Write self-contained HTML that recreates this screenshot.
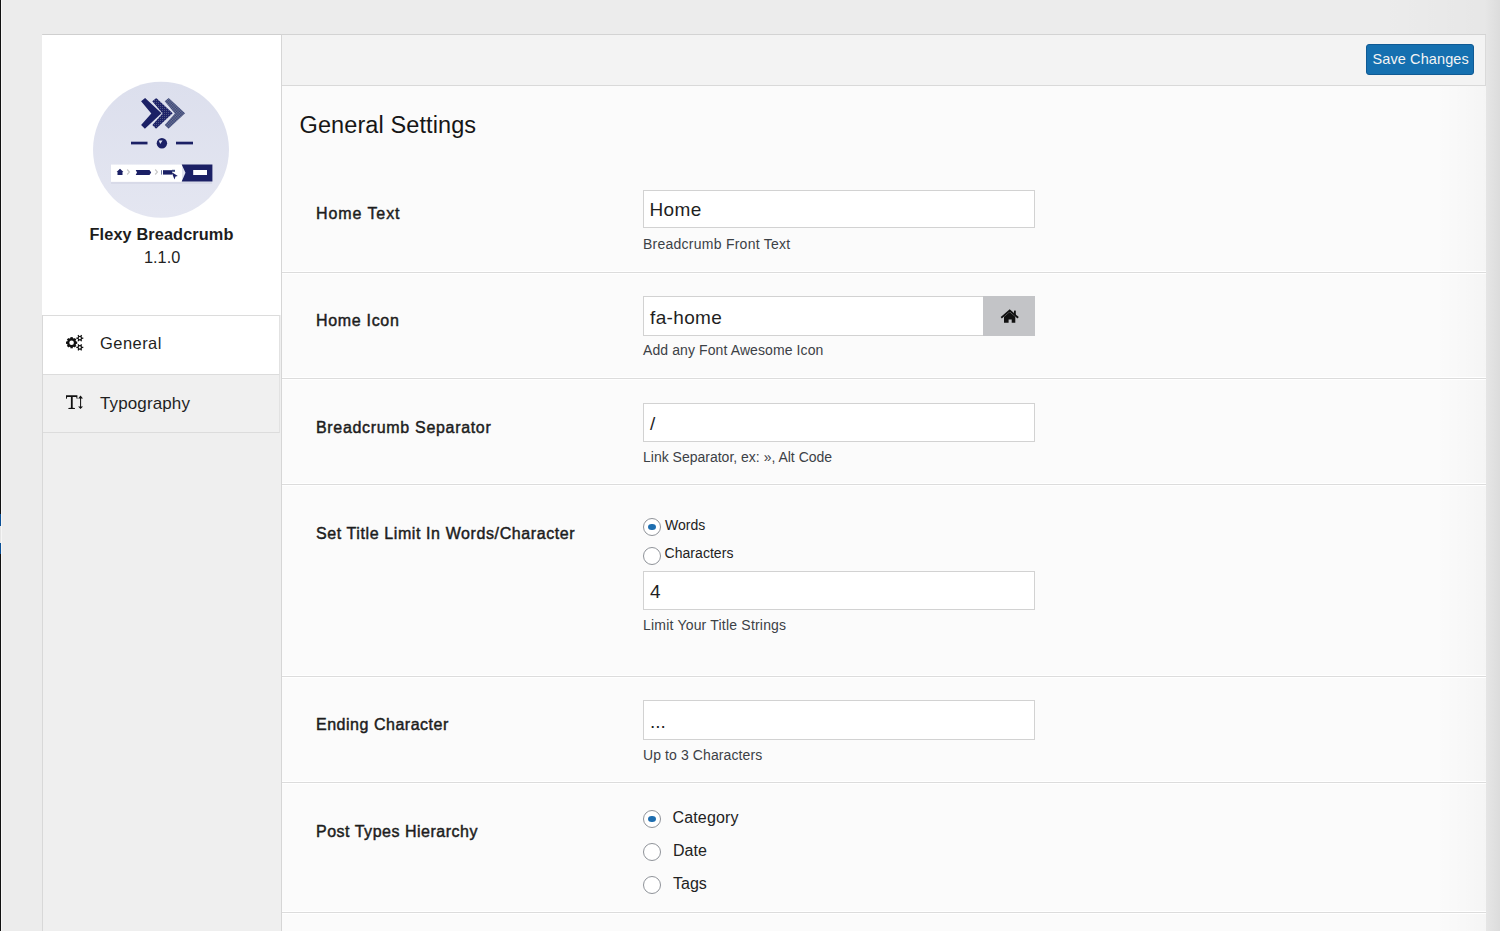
<!DOCTYPE html>
<html><head><meta charset="utf-8">
<style>
*{box-sizing:border-box;margin:0;padding:0}
html,body{width:1500px;height:931px;overflow:hidden;background:#ececec;font-family:"Liberation Sans",sans-serif;color:#23282d;position:relative}
.a{position:absolute}
.t{position:absolute;white-space:nowrap;line-height:1}
#edge{left:0;top:0;width:1px;height:931px;background:#111}
#side{left:42px;top:34px;width:240px;height:897px;background:#efefef;border-left:1px solid #d8d8d8;border-top:1px solid #cfcfcf}
#sidetop{left:42px;top:35px;width:239px;height:280px;background:#fff}
.pname{font-weight:bold;font-size:16.3px;color:#1d1d1d}
.tab{left:43px;width:237px;height:59px;border-top:1px solid #dcdcdc;border-right:1px solid #e2e2e2}
.tabt{font-size:16.5px;color:#1f1f1f}
#main{left:281px;top:34px;width:1206px;height:897px;background:#fbfbfb;border-left:1px solid #d6d6d6;border-top:1px solid #d3d3d3}
#hdr{left:282px;top:35px;width:1204px;height:51px;background:#f3f3f3;border-bottom:1px solid #d9d9d9;border-right:1px solid #dadada}
#rshade{left:1486px;top:0;width:14px;height:931px;background:linear-gradient(90deg,#e6e6e6,#dcdcdc)}
#topshade{left:1380px;top:0;width:106px;height:34px;background:linear-gradient(90deg,rgba(0,0,0,0),rgba(0,0,0,0.025))}
#save{left:1366px;top:44px;width:108px;height:31px;background:#1570b0;border:1px solid #0f5a94;border-radius:3px}
.savet{font-size:14.5px;color:#f4f4f4}
.h1{font-size:23.5px;color:#161616}
.sep{left:282px;width:1204px;height:1px;background:#dcdcdc;box-shadow:0 1px 0 #fff,0 -1px 0 #fff}
.lbl{font-size:16px;color:#1d1d1d;-webkit-text-stroke:0.45px #1d1d1d;letter-spacing:0.68px}
.inp{left:643px;width:392px;height:39px;background:#fff;border:1px solid #d2d2d2}
.it{font-size:19px;color:#1f1f1f}
.desc{font-size:14px;color:#3c4146}
.radio{left:643px;width:18px;height:18px;border-radius:50%;border:1px solid #8f9399;background:#fff}
.radio.on::after{content:"";position:absolute;left:4px;top:4.5px;width:8px;height:6.5px;border-radius:50%;background:#1e6eb0}
.rl{font-size:14px;color:#222}
.rl2{font-size:16px;color:#222}
</style></head><body>
<div id="edge" class="a"></div>
<div class="a" style="left:0;top:514px;width:1px;height:12px;background:#0b5096"></div>
<div class="a" style="left:0;top:526px;width:1px;height:17px;background:#e4e4e4"></div>
<div class="a" style="left:0;top:543px;width:1px;height:11px;background:#0b5096"></div>
<div class="a" style="left:1px;top:0;width:1px;height:931px;background:#f6f6f6"></div>
<div id="side" class="a"></div>
<div id="sidetop" class="a"></div>
<svg class="a" style="left:0;top:0" width="300" height="300" viewBox="0 0 300 300">
  <defs>
    <pattern id="p2" width="2" height="2" patternUnits="userSpaceOnUse"><rect width="2" height="2" fill="#1d2268"/><rect width="0.8" height="0.8" fill="#6d7396"/></pattern>
    <pattern id="p3" width="1.6" height="1.6" patternUnits="userSpaceOnUse"><rect width="1.6" height="1.6" fill="#27367a"/><rect width="0.8" height="0.8" fill="#7c8090"/><rect x="0.8" y="0.8" width="0.8" height="0.8" fill="#7c8090"/></pattern>
    <linearGradient id="cg" x1="0" y1="0" x2="0" y2="1">
      <stop offset="0" stop-color="#dcdfed"/><stop offset="1" stop-color="#e4e6f1"/>
    </linearGradient>
  </defs>
  <circle cx="161" cy="149.8" r="68" fill="url(#cg)"/>
  <polygon points="141.1,101.3 145.1,97.9 161.5,113.2 144.9,128.7 141.1,125.0 151.3,113.4" fill="#1b2065"/>
  <polygon points="152.3,101.3 156.3,97.9 172.7,113.2 156.1,128.7 152.3,125.0 162.5,113.4" fill="url(#p2)"/>
  <polygon points="164.7,101.3 168.7,97.9 185.1,113.2 168.5,128.7 164.7,125.0 174.9,113.4" fill="url(#p3)"/>
  <rect x="131" y="141.7" width="16.5" height="2.7" fill="#1b2065"/>
  <rect x="176" y="141.7" width="17" height="2.7" fill="#1b2065"/>
  <circle cx="161.9" cy="143.2" r="5.2" fill="#1b2065"/><path d="M158.8,140.6 L162.6,140.4 L160.2,144 Z" fill="#dfe2ef"/>
  <rect x="111" y="182" width="101" height="2" fill="#d8dae8"/>
  <rect x="111" y="164.6" width="71" height="17.2" fill="#ffffff"/>
  <polygon points="181.7,164.4 212.4,164.4 212.4,181.4 181.7,181.4 185.5,172.8" fill="#1b2065"/>
  <rect x="193.2" y="170" width="13.8" height="5" fill="#ffffff"/>
  <path d="M116.6,172 L120,168.8 L123.4,172 L122.5,172 V175 H117.5 V172 Z" fill="#1b2065"/>
  <path d="M127.2,169.5 L129.4,172 L127.2,174.5" stroke="#c8c8c8" stroke-width="1.2" fill="none"/>
  <path d="M135.7,170 H149.5 L151.2,172.5 L149.5,175 H135.7 L137,172.5 Z" fill="#1b2065"/>
  <path d="M155.2,169.5 L157.4,172 L155.2,174.5" stroke="#c8c8c8" stroke-width="1.2" fill="none"/>
  <rect x="161" y="170.2" width="1" height="4.4" fill="#6a76a0"/><rect x="163" y="170.2" width="9" height="4.4" fill="#1b2065"/><rect x="172" y="169.8" width="3" height="2" fill="#3a4880"/>
  <path d="M171.5,172 L174.5,179.5 L175.5,176.5 L177.8,176 Z" fill="#1b2065"/>
</svg>
<div class="t pname" style="left:89.5px;top:226px;letter-spacing:0.12px">Flexy Breadcrumb</div>
<div class="t" style="left:144px;top:249px;font-size:16.3px;color:#222">1.1.0</div>

<div class="a tab" style="top:315px;background:#fff"></div>
<div class="t tabt" style="left:100px;top:335px;letter-spacing:0.45px">General</div>
<div class="a tab" style="top:374px;background:#f0f0f0"></div>
<div class="t tabt" style="left:100px;top:395px;font-size:17px;letter-spacing:0.12px">Typography</div>
<div class="a tab" style="top:432px;height:1px"></div>
<svg class="a" style="left:60px;top:330px" width="30" height="26" viewBox="60 330 30 26"><g fill="#111"><g transform="translate(71.6,342.7)"><circle r="4.6"/><rect x="-1.2" y="-5.6" width="2.4" height="11.2" transform="rotate(0.0)"/><rect x="-1.2" y="-5.6" width="2.4" height="11.2" transform="rotate(45.0)"/><rect x="-1.2" y="-5.6" width="2.4" height="11.2" transform="rotate(90.0)"/><rect x="-1.2" y="-5.6" width="2.4" height="11.2" transform="rotate(135.0)"/></g><g transform="translate(79.8,338.2)"><circle r="2.3"/><rect x="-0.65" y="-3.5" width="1.3" height="7.0" transform="rotate(30.0)"/><rect x="-0.65" y="-3.5" width="1.3" height="7.0" transform="rotate(90.0)"/><rect x="-0.65" y="-3.5" width="1.3" height="7.0" transform="rotate(150.0)"/></g><g transform="translate(79.8,347.4)"><circle r="2.3"/><rect x="-0.65" y="-3.5" width="1.3" height="7.0" transform="rotate(30.0)"/><rect x="-0.65" y="-3.5" width="1.3" height="7.0" transform="rotate(90.0)"/><rect x="-0.65" y="-3.5" width="1.3" height="7.0" transform="rotate(150.0)"/></g></g><circle cx="71.6" cy="342.7" r="2.3" fill="#fff"/><circle cx="79.8" cy="338.2" r="1.1" fill="#fff"/><circle cx="79.8" cy="347.4" r="1.1" fill="#fff"/></svg>
<svg class="a" style="left:60px;top:390px" width="30" height="24" viewBox="60 390 30 24">
  <path d="M66,395.2 H77.4 V399 H76.9 L76.2,396.9 H72.7 V407.7 L74.9,408.1 V408.9 H68.4 V408.1 L70.9,407.7 V396.9 H67.2 L66.5,399 H66 Z" fill="#111"/>
  <rect x="80" y="397.5" width="1.1" height="10" fill="#222"/>
  <path d="M78.1,398.4 L80.55,395.6 L83,398.4 Z M78.1,406.4 L80.55,409.1 L83,406.4 Z" fill="#111"/>
</svg>

<div id="main" class="a"></div>
<div id="rshade" class="a"></div><div id="topshade" class="a"></div>
<div id="hdr" class="a"></div>
<div class="a" style="left:1436px;top:86px;width:50px;height:845px;background:linear-gradient(90deg,rgba(0,0,0,0),rgba(0,0,0,0.025))"></div>
<div id="save" class="a"></div>
<div class="t savet" style="left:1372.5px;top:52px;letter-spacing:0.1px">Save Changes</div>

<div class="t h1" style="left:299.5px;top:114px;letter-spacing:0.1px">General Settings</div>

<!-- row1 -->
<div class="t lbl" style="left:316px;top:206px;letter-spacing:0.92px">Home Text</div>
<div class="a inp" style="top:190px;height:38px"></div>
<div class="t it" style="left:649.5px;top:200px;letter-spacing:0.4px">Home</div>
<div class="t desc" style="left:643px;top:237px;letter-spacing:0.25px">Breadcrumb Front Text</div>
<div class="a sep" style="top:272px"></div>

<!-- row2 -->
<div class="t lbl" style="left:316px;top:313px">Home Icon</div>
<div class="a inp" style="top:296px;height:40px"></div>
<div class="a" style="left:983px;top:296px;width:52px;height:40px;background:#c3c4c7"></div>
<svg class="a" style="left:995px;top:305px" width="30" height="24" viewBox="995 305 30 24">
  <path d="M1001.9,317.2 L1009.7,310.5 L1017.5,317.2" stroke="#111" stroke-width="1.8" fill="none" stroke-linecap="square"/>
  <rect x="1014" y="310.6" width="1.8" height="4.5" fill="#111"/>
  <path d="M1004,316.8 L1009.7,312 L1015.3,316.8 V322.8 H1011.7 V319.6 H1008.6 V322.8 H1004 Z" fill="#111"/>
</svg>
<div class="t it" style="left:650px;top:308px;letter-spacing:0.35px">fa-home</div>
<div class="t desc" style="left:643px;top:343px;letter-spacing:0.1px">Add any Font Awesome Icon</div>
<div class="a sep" style="top:378px"></div>

<!-- row3 -->
<div class="t lbl" style="left:316px;top:420px">Breadcrumb Separator</div>
<div class="a inp" style="top:403px"></div>
<div class="t it" style="left:650px;top:414px">/</div>
<div class="t desc" style="left:643px;top:450px">Link Separator, ex: », Alt Code</div>
<div class="a sep" style="top:484px"></div>

<!-- row4 -->
<div class="t lbl" style="left:316px;top:526px;letter-spacing:0.6px">Set Title Limit In Words/Character</div>
<div class="a radio on" style="top:518px"></div>
<div class="t rl" style="left:665px;top:518px">Words</div>
<div class="a radio" style="top:547px"></div>
<div class="t rl" style="left:664.5px;top:546px;letter-spacing:0.05px">Characters</div>
<div class="a inp" style="top:571px"></div>
<div class="t it" style="left:650px;top:582px">4</div>
<div class="t desc" style="left:643px;top:618px;letter-spacing:0.2px">Limit Your Title Strings</div>
<div class="a sep" style="top:676px"></div>

<!-- row5 -->
<div class="t lbl" style="left:316px;top:717px;letter-spacing:0.52px">Ending Character</div>
<div class="a inp" style="top:700px;height:40px"></div>
<div class="t it" style="left:650px;top:712px">...</div>
<div class="t desc" style="left:643px;top:748px;letter-spacing:0.1px">Up to 3 Characters</div>
<div class="a sep" style="top:782px"></div>

<!-- row6 -->
<div class="t lbl" style="left:316px;top:824px;letter-spacing:0.51px">Post Types Hierarchy</div>
<div class="a radio on" style="top:810px"></div>
<div class="t rl2" style="left:672.5px;top:810px;letter-spacing:0.15px">Category</div>
<div class="a radio" style="top:843px"></div>
<div class="t rl2" style="left:673px;top:843px">Date</div>
<div class="a radio" style="top:876px"></div>
<div class="t rl2" style="left:673px;top:876px">Tags</div>
<div class="a sep" style="top:912px"></div>
</body></html>
